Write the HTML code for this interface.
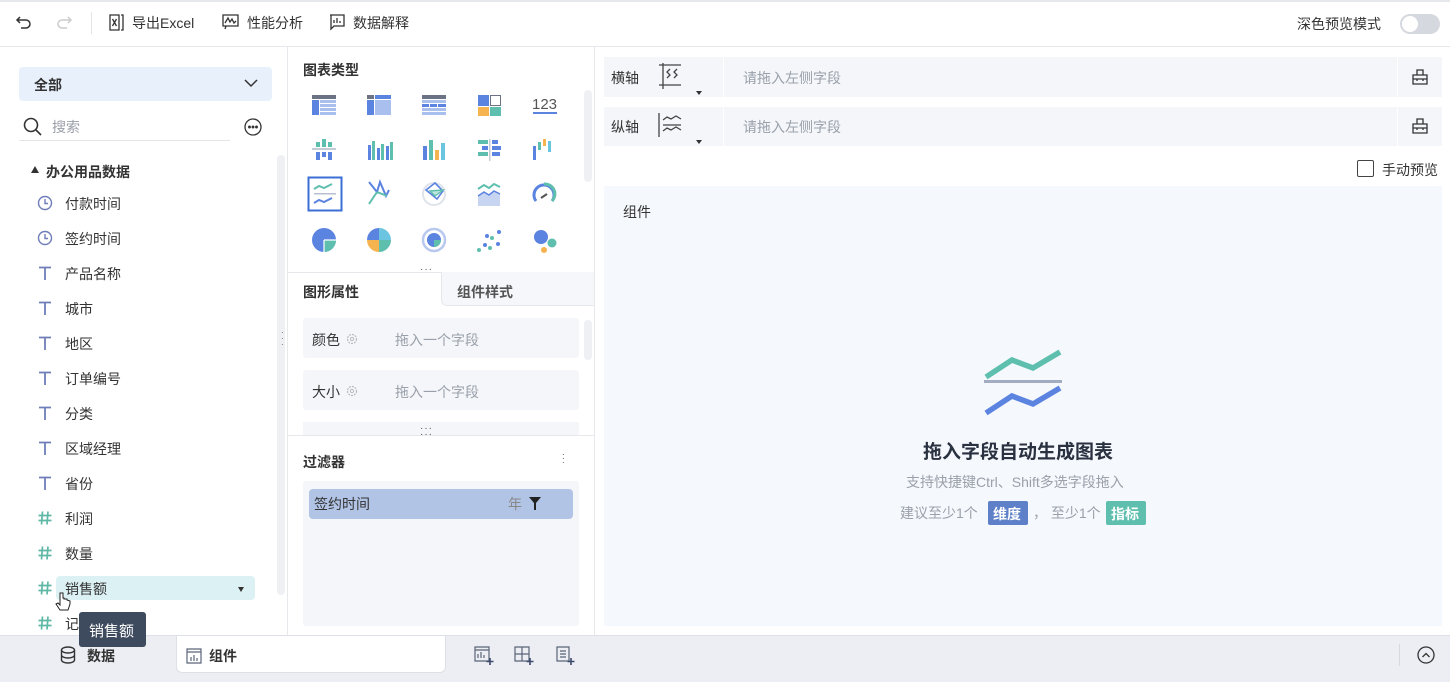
<!DOCTYPE html>
<html><head><meta charset="utf-8"><style>
*{margin:0;padding:0;box-sizing:border-box}
body{width:1450px;height:682px;overflow:hidden;background:#fff;font-family:"Liberation Sans","Noto Sans CJK SC",sans-serif;font-size:14px;color:#333;position:relative}
.a{position:absolute}
.t{color:#333;font-size:14px;white-space:nowrap}
.g{color:#9aa0aa}
.ic{position:absolute}
</style></head><body>
<!-- top bar -->
<div class="a" style="left:0;top:0;width:1450px;height:2px;background:#e6e8ec"></div>
<div class="a" style="left:0;top:46px;width:1450px;height:1px;background:#e6e8ec"></div>
<svg class="ic" style="left:15px;top:14px" width="18" height="18" viewBox="0 0 18 18" fill="none" stroke="#333" stroke-width="1.5"><path d="M5 3L2 6l3 3M2 6h9a4 4 0 010 8H6"/></svg>
<svg class="ic" style="left:55px;top:14px" width="18" height="18" viewBox="0 0 18 18" fill="none" stroke="#ccc" stroke-width="1.5"><path d="M13 3l3 3-3 3M16 6H7a4 4 0 000 8h5"/></svg>
<div class="a" style="left:91px;top:12px;width:1px;height:22px;background:#e3e5e8"></div>
<svg class="ic" style="left:109px;top:14px" width="16" height="17" viewBox="0 0 16 17" fill="none" stroke="#333" stroke-width="1.3"><path d="M1 1h9v15H1zM12 1h2v15h-2M3.5 5l4 7M7.5 5l-4 7"/></svg>
<div class="a t" style="left:132px;top:13px">导出Excel</div>
<svg class="ic" style="left:222px;top:14px" width="17" height="16" viewBox="0 0 17 16" fill="none" stroke="#333" stroke-width="1.3"><path d="M1 1h15v11H1zM3 9l3-5 2 4 2-3 2 4 2-2M4 12l-1 3"/></svg>
<div class="a t" style="left:247px;top:13px">性能分析</div>
<svg class="ic" style="left:329px;top:14px" width="16" height="17" viewBox="0 0 16 17" fill="none" stroke="#333" stroke-width="1.3"><path d="M1 1h14v11H5l-3 3V1M5 9V6M8 9V4M11 9V7"/></svg>
<div class="a t" style="left:353px;top:13px">数据解释</div>
<div class="a t" style="left:1297px;top:14px">深色预览模式</div>
<div class="a" style="left:1400px;top:14px;width:40px;height:20px;border-radius:10px;background:#d5d8de"></div>
<div class="a" style="left:1402px;top:16px;width:16px;height:16px;border-radius:8px;background:#fff"></div>

<!-- left panel -->
<div class="a" style="left:287px;top:47px;width:1px;height:588px;background:#e6e8ec"></div>
<div class="a" style="left:19px;top:67px;width:253px;height:34px;background:#e7f0fb;border-radius:4px"></div>
<div class="a t" style="left:34px;top:75px;font-weight:bold">全部</div>
<svg class="ic" style="left:244px;top:79px" width="14" height="9" viewBox="0 0 14 9" fill="none" stroke="#333" stroke-width="1.5"><path d="M1 1l6 6 6-6"/></svg>
<svg class="ic" style="left:23px;top:117px" width="19" height="19" viewBox="0 0 19 19" fill="none" stroke="#333" stroke-width="1.6"><circle cx="8" cy="8" r="6.5"/><path d="M13 13l5 5"/></svg>
<div class="a t g" style="left:52px;top:117px">搜索</div>
<div class="a" style="left:19px;top:140px;width:211px;height:1px;background:#e3e5e8"></div>
<svg class="ic" style="left:244px;top:118px" width="18" height="18" viewBox="0 0 18 18" fill="none" stroke="#333" stroke-width="1.3"><circle cx="9" cy="9" r="8"/><circle cx="5.5" cy="9" r=".8" fill="#333"/><circle cx="9" cy="9" r=".8" fill="#333"/><circle cx="12.5" cy="9" r=".8" fill="#333"/></svg>
<div class="a" style="left:277px;top:155px;width:8px;height:440px;background:#eef0f3;border-radius:4px"></div>
<div class="a" style="left:31px;top:166px;width:0;height:0;border-left:4px solid transparent;border-right:4px solid transparent;border-bottom:7px solid #333"></div>
<div class="a t" style="left:46px;top:162px;font-weight:bold">办公用品数据</div>

<svg width="0" height="0" style="position:absolute"><defs>
<symbol id="clk" viewBox="0 0 16 16"><circle cx="8" cy="8" r="6.5" fill="none" stroke="#6f7db8" stroke-width="1.4"/><path d="M8 4v4.5h3" fill="none" stroke="#6f7db8" stroke-width="1.4"/></symbol>
<symbol id="tt" viewBox="0 0 16 16"><path d="M2 2.5h12M8 2.5V15" fill="none" stroke="#6f7db8" stroke-width="1.8"/></symbol>
<symbol id="hs" viewBox="0 0 16 16"><path d="M5.5 1.5L4.5 14.5M11 1.5L10 14.5M1.5 5.5h13M1.5 10.5h13" fill="none" stroke="#5fb8a5" stroke-width="1.7"/></symbol>
</defs></svg>
<svg class="ic" style="left:37px;top:195px" width="16" height="16"><use href="#clk"/></svg><div class="a t" style="left:65px;top:194px">付款时间</div>
<svg class="ic" style="left:37px;top:230px" width="16" height="16"><use href="#clk"/></svg><div class="a t" style="left:65px;top:229px">签约时间</div>
<svg class="ic" style="left:37px;top:265px" width="16" height="16"><use href="#tt"/></svg><div class="a t" style="left:65px;top:264px">产品名称</div>
<svg class="ic" style="left:37px;top:300px" width="16" height="16"><use href="#tt"/></svg><div class="a t" style="left:65px;top:299px">城市</div>
<svg class="ic" style="left:37px;top:335px" width="16" height="16"><use href="#tt"/></svg><div class="a t" style="left:65px;top:334px">地区</div>
<svg class="ic" style="left:37px;top:370px" width="16" height="16"><use href="#tt"/></svg><div class="a t" style="left:65px;top:369px">订单编号</div>
<svg class="ic" style="left:37px;top:405px" width="16" height="16"><use href="#tt"/></svg><div class="a t" style="left:65px;top:404px">分类</div>
<svg class="ic" style="left:37px;top:440px" width="16" height="16"><use href="#tt"/></svg><div class="a t" style="left:65px;top:439px">区域经理</div>
<svg class="ic" style="left:37px;top:475px" width="16" height="16"><use href="#tt"/></svg><div class="a t" style="left:65px;top:474px">省份</div>
<svg class="ic" style="left:37px;top:510px" width="16" height="16"><use href="#hs"/></svg><div class="a t" style="left:65px;top:509px">利润</div>
<svg class="ic" style="left:37px;top:545px" width="16" height="16"><use href="#hs"/></svg><div class="a t" style="left:65px;top:544px">数量</div>
<div class="a" style="left:56px;top:576px;width:199px;height:24px;background:#dcf1f3;border-radius:4px"></div>
<svg class="ic" style="left:37px;top:580px" width="16" height="16"><use href="#hs"/></svg><div class="a t" style="left:65px;top:579px">销售额</div>
<div class="a" style="left:238px;top:587px;border-left:3.5px solid transparent;border-right:3.5px solid transparent;border-top:5px solid #333"></div>
<svg class="ic" style="left:37px;top:615px" width="16" height="16"><use href="#hs"/></svg><div class="a t" style="left:65px;top:614px">记</div>

<!-- middle panel -->
<div class="a" style="left:594px;top:47px;width:1px;height:588px;background:#e6e8ec"></div>
<div class="a t" style="left:303px;top:60px;font-weight:bold">图表类型</div>
<div class="a" style="left:584px;top:90px;width:8px;height:92px;background:#eef0f3;border-radius:4px"></div>
<svg class="ic" style="left:300px;top:85px" width="270" height="170" viewBox="300 85 270 170">
<rect x="312" y="95" width="24" height="4" fill="#6c7384"/><rect x="312" y="100" width="7" height="15" fill="#5b83e0"/><rect x="320" y="100" width="16" height="3" fill="#a9c0ee"/><rect x="320" y="104" width="16" height="3" fill="#a9c0ee"/><rect x="320" y="108" width="16" height="3" fill="#a9c0ee"/><rect x="320" y="112" width="16" height="3" fill="#a9c0ee"/>
<rect x="367" y="95" width="7" height="4" fill="#6c7384"/><rect x="375" y="95" width="16" height="4" fill="#5b83e0"/><rect x="367" y="100" width="7" height="15" fill="#5b83e0"/><rect x="375" y="100" width="16" height="15" fill="#a9c0ee"/>
<rect x="422" y="95" width="24" height="4" fill="#6c7384"/><rect x="422" y="100" width="24" height="3" fill="#a9c0ee"/><rect x="422" y="104" width="7" height="3" fill="#5b83e0"/><rect x="430" y="104" width="7" height="3" fill="#5b83e0"/><rect x="438" y="104" width="8" height="3" fill="#5b83e0"/><rect x="422" y="108" width="24" height="3" fill="#a9c0ee"/><rect x="422" y="112" width="24" height="3" fill="#a9c0ee"/>
<rect x="478" y="95" width="11" height="11" fill="#5b83e0"/><rect x="490.5" y="95.5" width="10" height="10" fill="#fff" stroke="#6c7384"/><rect x="478" y="107" width="11" height="9" fill="#f5b450"/><rect x="490" y="107" width="11" height="9" fill="#5fbfae"/>
<text x="532" y="109" font-family="Liberation Sans" font-size="15" fill="#555">123</text><rect x="533" y="112" width="24" height="2" fill="#5b83e0"/>
<rect x="312" y="148" width="24" height="2" fill="#c4cbd6"/><rect x="316" y="142" width="4" height="5" fill="#5fbfae"/><rect x="322" y="139" width="4" height="8" fill="#5fbfae"/><rect x="328" y="142" width="4" height="5" fill="#5fbfae"/><rect x="316" y="152" width="4" height="8" fill="#5b83e0"/><rect x="322" y="152" width="4" height="5" fill="#5b83e0"/><rect x="328" y="152" width="4" height="8" fill="#5b83e0"/>
<rect x="368" y="145" width="3" height="15" fill="#5b83e0"/><rect x="372" y="141" width="3" height="19" fill="#5fbfae"/><rect x="377" y="148" width="3" height="12" fill="#5b83e0"/><rect x="381" y="144" width="3" height="16" fill="#5fbfae"/><rect x="386" y="146" width="3" height="14" fill="#5b83e0"/><rect x="390" y="142" width="3" height="18" fill="#5fbfae"/>
<rect x="423" y="146" width="4" height="14" fill="#5b83e0"/><rect x="429" y="140" width="4" height="20" fill="#5fbfae"/><rect x="435" y="150" width="4" height="10" fill="#f5b450"/><rect x="441" y="143" width="4" height="17" fill="#6cc5e0"/>
<rect x="478" y="140" width="10" height="4" fill="#5fbfae"/><rect x="489" y="139" width="1.5" height="22" fill="#c4cbd6"/><rect x="492" y="140" width="6" height="4" fill="#5b83e0"/><rect x="482" y="146" width="6" height="4" fill="#5b83e0"/><rect x="492" y="146" width="9" height="4" fill="#5b83e0"/><rect x="478" y="152" width="10" height="4" fill="#5fbfae"/><rect x="492" y="152" width="8" height="4" fill="#5b83e0"/>
<rect x="533" y="146" width="3" height="14" fill="#5b83e0"/><rect x="538" y="142" width="3" height="8" fill="#5fbfae"/><rect x="543" y="139" width="3" height="7" fill="#f5b450"/><rect x="548" y="141" width="3" height="11" fill="#6cc5e0"/>
<rect x="308.5" y="177.5" width="33" height="33" fill="none" stroke="#3b6fd4" stroke-width="2"/>
<path d="M314 189l5-3 5 2 8-4" stroke="#5fbfae" stroke-width="2" fill="none"/><rect x="314" y="193" width="22" height="1.5" fill="#b8c0cf"/><path d="M314 203l5-3 5 2 8-4" stroke="#5b83e0" stroke-width="2" fill="none"/>
<path d="M369 182l8 10 3-10 6 14 3-6" stroke="#5b83e0" stroke-width="2" fill="none"/><path d="M369 204l8-12M377 192l10 4" stroke="#5fbfae" stroke-width="2" fill="none"/>
<circle cx="434" cy="194" r="11" fill="none" stroke="#dfe3ea" stroke-width="2"/><path d="M426 190l9-7 8 8-6 8z" fill="none" stroke="#5b83e0" stroke-width="1.6"/><path d="M430 191l13-1-8 6z" fill="#bfe7e0" stroke="#5fbfae" stroke-width="1.4"/>
<path d="M478 196l6-4 5 3 5-4 6 3v12h-22z" fill="#c7d4f2"/><path d="M478 189l6-4 5 3 5-4 6 3" stroke="#5fbfae" stroke-width="2" fill="none"/><path d="M478 196l6-4 5 3 5-4 6 3" stroke="#5b83e0" stroke-width="1.5" fill="none"/>
<path d="M536 201a10 10 0 1 1 16 0" stroke="#5b83e0" stroke-width="3" fill="none"/><path d="M544 184a10 10 0 0 1 8 17" stroke="#5fbfae" stroke-width="3" fill="none"/><path d="M541 198l6-4" stroke="#555" stroke-width="2"/>
<circle cx="324" cy="240" r="12" fill="#5b83e0"/><path d="M324 240h12a12 12 0 0 1-12 12z" fill="#5fbfae"/><path d="M324 240h12M324 240v12" stroke="#fff" stroke-width="1.2"/>
<path d="M379 240v-12a12 12 0 0 1 12 12z" fill="#6cc5e0"/><path d="M379 240h12a12 12 0 0 1-12 12z" fill="#5fbfae"/><path d="M379 240v12a12 12 0 0 1-12-12z" fill="#f5b450"/><path d="M379 240h-12a12 12 0 0 1 12-12z" fill="#5b83e0"/>
<circle cx="434" cy="240" r="11" fill="none" stroke="#b8c8ee" stroke-width="2.5"/><circle cx="434" cy="240" r="7" fill="#5b83e0"/><path d="M434 240h7a7 7 0 0 1-7 7z" fill="#5fbfae"/>
<circle cx="479" cy="250" r="2" fill="#5fbfae"/><circle cx="485" cy="245" r="2" fill="#5b83e0"/><circle cx="490" cy="248" r="2" fill="#5fbfae"/><circle cx="487" cy="236" r="2" fill="#5b83e0"/><circle cx="492" cy="238" r="2" fill="#5fbfae"/><circle cx="498" cy="244" r="2" fill="#5b83e0"/><circle cx="499" cy="232" r="2" fill="#5b83e0"/>
<circle cx="541" cy="237" r="7" fill="#5b83e0"/><circle cx="552" cy="243" r="4.5" fill="#5fbfae"/><circle cx="544" cy="250" r="3" fill="#f5b450"/>
</svg>
<div class="a" style="left:288px;top:272px;width:306px;height:1px;background:#e6e8ec"></div>
<div class="a" style="left:420px;top:264px;font-size:10px;color:#555;letter-spacing:1px">···</div>
<div class="a" style="left:441px;top:272px;width:153px;height:34px;background:#f5f7fa;border-left:1px solid #e6e8ec;border-bottom:1px solid #e6e8ec;border-bottom-left-radius:6px"></div>
<div class="a t" style="left:303px;top:282px;font-weight:bold">图形属性</div>
<div class="a t" style="left:457px;top:282px;font-weight:bold;color:#555">组件样式</div>
<div class="a" style="left:281px;top:330px;width:3px;font-size:8px;line-height:6px;color:#555">·<br>·<br>·</div>
<div class="a" style="left:303px;top:318px;width:276px;height:40px;background:#f4f6fa;border-radius:3px"></div>
<div class="a t" style="left:312px;top:330px">颜色</div>
<svg class="ic" style="left:346px;top:333px" width="12" height="12" viewBox="0 0 12 12"><circle cx="6" cy="6" r="4.5" fill="none" stroke="#bbb" stroke-width="1.2" stroke-dasharray="2 1"/><circle cx="6" cy="6" r="1.6" fill="none" stroke="#bbb"/></svg>
<div class="a t g" style="left:395px;top:330px">拖入一个字段</div>
<div class="a" style="left:584px;top:320px;width:8px;height:40px;background:#eef0f3;border-radius:4px"></div>
<div class="a" style="left:303px;top:370px;width:276px;height:40px;background:#f4f6fa;border-radius:3px"></div>
<div class="a t" style="left:312px;top:382px">大小</div>
<svg class="ic" style="left:346px;top:385px" width="12" height="12" viewBox="0 0 12 12"><circle cx="6" cy="6" r="4.5" fill="none" stroke="#bbb" stroke-width="1.2" stroke-dasharray="2 1"/><circle cx="6" cy="6" r="1.6" fill="none" stroke="#bbb"/></svg>
<div class="a t g" style="left:395px;top:382px">拖入一个字段</div>
<div class="a" style="left:303px;top:422px;width:276px;height:13px;background:#f4f6fa"></div>
<div class="a" style="left:288px;top:435px;width:306px;height:1px;background:#e6e8ec"></div>
<div class="a" style="left:420px;top:423px;font-size:10px;color:#555;letter-spacing:1px">···</div>
<div class="a" style="left:420px;top:429px;font-size:10px;color:#555;letter-spacing:1px">···</div>
<div class="a t" style="left:303px;top:452px;font-weight:bold">过滤器</div>
<div class="a" style="left:562px;top:453px;font-size:8px;line-height:4px;color:#333">·<br>·<br>·</div>
<div class="a" style="left:303px;top:481px;width:276px;height:145px;background:#f4f6fa;border-radius:3px"></div>
<div class="a" style="left:309px;top:489px;width:264px;height:30px;background:#b1c4e6;border-radius:4px"></div>
<div class="a t" style="left:314px;top:494px">签约时间</div>
<div class="a t" style="left:508px;top:494px;color:#888">年</div>
<svg class="ic" style="left:529px;top:497px" width="12" height="13" viewBox="0 0 12 13"><path d="M0 0h12L7 6v7H5V6z" fill="#222"/></svg>

<!-- right panel -->
<div class="a" style="left:604px;top:57px;width:838px;height:40px;background:#f4f6fa"></div>
<div class="a" style="left:723px;top:57px;width:1px;height:40px;background:#fff"></div>
<div class="a" style="left:1397px;top:57px;width:1px;height:40px;background:#fff"></div>
<div class="a t" style="left:611px;top:68px">横轴</div>
<svg class="ic" style="left:657px;top:63px" width="26" height="26" viewBox="0 0 26 26" fill="none" stroke="#444" stroke-width="1.3"><path d="M2 2h22M2 22h22M6 0v26M13 6l-3 3 3 3-3 3M20 6l-3 3 3 3-3 3"/></svg>
<div class="a" style="left:696px;top:91px;border-left:3px solid transparent;border-right:3px solid transparent;border-top:4px solid #333"></div>
<div class="a t g" style="left:743px;top:68px">请拖入左侧字段</div>
<svg class="ic" style="left:1412px;top:69px" width="16" height="16" viewBox="0 0 16 16" fill="none" stroke="#333" stroke-width="1.3"><path d="M1 6h14v9H1zM5 6V1h6v5M1 10h14M5 10v2M11 10v2"/></svg>
<div class="a" style="left:604px;top:107px;width:838px;height:39px;background:#f4f6fa"></div>
<div class="a" style="left:723px;top:107px;width:1px;height:39px;background:#fff"></div>
<div class="a" style="left:1397px;top:107px;width:1px;height:39px;background:#fff"></div>
<div class="a t" style="left:611px;top:117px">纵轴</div>
<svg class="ic" style="left:657px;top:112px" width="26" height="26" viewBox="0 0 26 26" fill="none" stroke="#444" stroke-width="1.3"><path d="M2 1v24M6 8l4-3 4 2 5-3 5 3M6 13h18M6 19l4-3 4 2 5-3 5 3"/></svg>
<div class="a" style="left:696px;top:140px;border-left:3px solid transparent;border-right:3px solid transparent;border-top:4px solid #333"></div>
<div class="a t g" style="left:743px;top:117px">请拖入左侧字段</div>
<svg class="ic" style="left:1412px;top:118px" width="16" height="16" viewBox="0 0 16 16" fill="none" stroke="#333" stroke-width="1.3"><path d="M1 6h14v9H1zM5 6V1h6v5M1 10h14M5 10v2M11 10v2"/></svg>
<div class="a" style="left:1357px;top:160px;width:17px;height:17px;border:1.3px solid #444;border-radius:2px"></div>
<div class="a t" style="left:1382px;top:160px">手动预览</div>
<div class="a" style="left:604px;top:186px;width:838px;height:440px;background:#f5f8fc"></div>
<div class="a t" style="left:623px;top:202px">组件</div>
<svg class="ic" style="left:980px;top:345px" width="86" height="75" viewBox="980 345 86 75"><path d="M986 377l26-17 21 8 27-16" stroke="#5fbfae" stroke-width="5.5" fill="none"/><rect x="984" y="380" width="78" height="3" fill="#a3adc2"/><path d="M986 413l26-17 21 8 27-16" stroke="#5b83e0" stroke-width="5.5" fill="none"/></svg>
<div class="a" style="left:923px;top:437px;font-size:19px;font-weight:bold;color:#2a3140">拖入字段自动生成图表</div>
<div class="a" style="left:906px;top:472px;font-size:14px;color:#9aa0aa">支持快捷键Ctrl、Shift多选字段拖入</div>
<div class="a" style="left:900px;top:503px;font-size:14px;color:#9aa0aa">建议至少1个</div>
<div class="a" style="left:988px;top:501px;width:40px;height:24px;background:#5d80c8;border-radius:2px;color:#fff;font-size:14px;font-weight:bold;padding:3px 0 0 5px">维度</div>
<div class="a" style="left:1033px;top:503px;font-size:14px;color:#9aa0aa">， 至少1个</div>
<div class="a" style="left:1106px;top:501px;width:40px;height:24px;background:#5fbfae;border-radius:2px;color:#fff;font-size:14px;font-weight:bold;padding:3px 0 0 5px">指标</div>

<!-- bottom bar -->
<div class="a" style="left:0;top:635px;width:1450px;height:47px;background:#eceef3;border-top:1px solid #dde0e6"></div>
<div class="a" style="left:176px;top:636px;width:270px;height:37px;background:#fff;border:1px solid #dde0e6;border-top:none;border-radius:0 0 6px 6px"></div>
<svg class="ic" style="left:60px;top:646px" width="16" height="18" viewBox="0 0 16 18" fill="none" stroke="#333" stroke-width="1.4"><ellipse cx="8" cy="4" rx="6.5" ry="3"/><path d="M1.5 4v10c0 1.7 3 3 6.5 3s6.5-1.3 6.5-3V4M1.5 9c0 1.7 3 3 6.5 3s6.5-1.3 6.5-3"/></svg>
<div class="a t" style="left:87px;top:646px;font-weight:bold">数据</div>
<svg class="ic" style="left:186px;top:648px" width="16" height="16" viewBox="0 0 16 16" fill="none" stroke="#5a6478" stroke-width="1.2"><path d="M1 1h14v14H1zM1 4h14M5 13V9M8 13V7M11 13v-3"/></svg>
<div class="a t" style="left:209px;top:646px;font-weight:bold">组件</div>
<svg class="ic" style="left:474px;top:646px" width="20" height="20" viewBox="0 0 20 20" fill="none" stroke="#5a6478" stroke-width="1.2"><path d="M1 1h14v14H1zM1 4h14M4 12V8M7 12V6M10 12V9"/><path d="M16 12v7M12.5 15.5h7" stroke="#3c4a6b" stroke-width="1.6"/></svg>
<svg class="ic" style="left:514px;top:646px" width="20" height="20" viewBox="0 0 20 20" fill="none" stroke="#5a6478" stroke-width="1.2"><path d="M1 1h14v14H1zM1 8h14M8 1v14"/><path d="M16 12v7M12.5 15.5h7" stroke="#3c4a6b" stroke-width="1.6"/></svg>
<svg class="ic" style="left:556px;top:646px" width="20" height="20" viewBox="0 0 20 20" fill="none" stroke="#5a6478" stroke-width="1.2"><path d="M1 1h12v14H1zM4 5h6M4 8h6M4 11h6"/><path d="M15 12v7M11.5 15.5h7" stroke="#3c4a6b" stroke-width="1.6"/></svg>
<div class="a" style="left:1399px;top:644px;width:1px;height:22px;background:#d5d8de"></div>
<svg class="ic" style="left:1417px;top:646px" width="18" height="18" viewBox="0 0 18 18" fill="none" stroke="#333" stroke-width="1.3"><circle cx="9" cy="9" r="8"/><path d="M5.5 11l3.5-3.5 3.5 3.5"/></svg>

<!-- cursor + tooltip on top -->
<svg class="ic" style="left:54px;top:591px;z-index:5" width="20" height="24" viewBox="0 0 20 24"><path d="M6 2v12l-2-2-2 1 4 6h8l2-6V10l-3-1V8l-3 0V7L9 7V2z" fill="#fff" stroke="#222" stroke-width="1"/></svg>
<div class="a" style="left:79px;top:612px;width:67px;height:35px;background:#3e4a5e;border-radius:3px;color:#fff;font-size:15px;padding:8px 0 0 10px;z-index:5">销售额</div>
</body></html>
